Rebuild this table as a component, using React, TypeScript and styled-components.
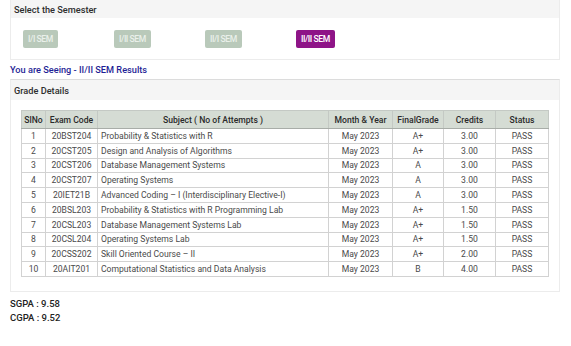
import React from "react";
import styled, { createGlobalStyle } from "styled-components";

const GlobalStyle = createGlobalStyle`
  body {
    margin: 0;
    background: #ffffff;
    font-family: Roboto, "Liberation Sans", Arial, sans-serif;
  }
`;

const Page = styled.div`
  width: 571px;
  height: 346px;
  padding: 0 11px 0 10px;
  box-sizing: border-box;
  overflow: hidden;
`;

const Panel = styled.div`
  border: 1px solid #ececec;
  border-top: none;
  background: #fff;
`;

const PanelHeader = styled.div<{ $h: number }>`
  height: ${({ $h }) => $h}px;
  display: flex;
  align-items: center;
  padding-left: 3px;
  background: #f5f5f5;
  color: #2e2e2e;
  font-size: 9.2px;
  font-weight: 500;
`;

const SemRow = styled.div`
  display: grid;
  grid-template-columns: repeat(4, 91px);
  padding: 12px 0 11px 12px;
`;

const SemButton = styled.div<{ $active?: boolean }>`
  justify-self: start;
  height: 18px;
  padding: 0 5px;
  display: flex;
  align-items: center;
  border-radius: 2px;
  background: ${({ $active }) => ($active ? "#8e1487" : "#b9c9ba")};
  color: ${({ $active }) => ($active ? "#fff" : "#eaf0ea")};
  font-size: 8.6px;
  font-weight: 500;
  letter-spacing: -0.45px;
`;

const Seeing = styled.div`
  height: 19px;
  display: flex;
  align-items: center;
  color: #1f1f96;
  font-size: 9.2px;
  font-weight: 500;
`;

const GradePanel = styled.div`
  border: 1px solid #ececec;
  border-top: 1px solid #dcdcdc;
  padding-bottom: 14px;
`;

const TableWrap = styled.div`
  padding: 10px 0 0 10px;
`;

const Table = styled.table`
  border-collapse: collapse;
  table-layout: fixed;
  width: 527px;
  border: 1px solid #9a9a9a;
  font-size: 8.6px;
  color: #4a4a4a;
`;

const Th = styled.th`
  height: 17px;
  padding: 0;
  background: #d5dcd4;
  border: 1px solid #c4c9c4;
  border-bottom: 1px solid #a8ada8;
  color: #2a2a2a;
  font-weight: 500;
  text-align: center;
  white-space: nowrap;
`;

const Td = styled.td<{ $left?: boolean }>`
  height: 13.8px;
  padding: 0 ${({ $left }) => ($left ? "3px" : "0")};
  border: 1px solid #d2d2d2;
  text-align: ${({ $left }) => ($left ? "left" : "center")};
  white-space: nowrap;
  overflow: hidden;
`;

const Gpa = styled.div`
  padding-top: 5px;
  color: #222;
  font-size: 9.5px;
  font-weight: 500;
  line-height: 14px;
`;

const rows = [
  ["20BST204", "Probability & Statistics with R", "A+", "3.00"],
  ["20CST205", "Design and Analysis of Algorithms", "A+", "3.00"],
  ["20CST206", "Database Management Systems", "A", "3.00"],
  ["20CST207", "Operating Systems", "A", "3.00"],
  ["20IET21B", "Advanced Coding – I (Interdisciplinary Elective-I)", "A", "3.00"],
  ["20BSL203", "Probability & Statistics with R Programming Lab", "A+", "1.50"],
  ["20CSL203", "Database Management Systems Lab", "A+", "1.50"],
  ["20CSL204", "Operating Systems Lab", "A+", "1.50"],
  ["20CSS202", "Skill Oriented Course – II", "A+", "2.00"],
  ["20AIT201", "Computational Statistics and Data Analysis", "B", "4.00"],
];

const widths = [24, 52, 231, 64, 51, 52, 53];

const App = () => {
  return (
    <Page>
      <GlobalStyle />
      <Panel>
        <PanelHeader $h={18}>Select the Semester</PanelHeader>
        <SemRow>
          <SemButton>I/I SEM</SemButton>
          <SemButton>I/II SEM</SemButton>
          <SemButton>II/I SEM</SemButton>
          <SemButton $active>II/II SEM</SemButton>
        </SemRow>
      </Panel>
      <Seeing>You are Seeing - II/II SEM Results</Seeing>
      <GradePanel>
        <PanelHeader $h={20}>Grade Details</PanelHeader>
        <TableWrap>
          <Table>
            <colgroup>
              {widths.map((w, i) => (
                <col key={i} style={{ width: w }} />
              ))}
            </colgroup>
            <thead>
              <tr>
                <Th>SlNo</Th>
                <Th>Exam Code</Th>
                <Th>Subject ( No of Attempts )</Th>
                <Th>Month &amp; Year</Th>
                <Th>FinalGrade</Th>
                <Th>Credits</Th>
                <Th>Status</Th>
              </tr>
            </thead>
            <tbody>
              {rows.map((r, i) => (
                <tr key={r[0]}>
                  <Td>{i + 1}</Td>
                  <Td>{r[0]}</Td>
                  <Td $left>{r[1]}</Td>
                  <Td>May 2023</Td>
                  <Td>{r[2]}</Td>
                  <Td>{r[3]}</Td>
                  <Td>PASS</Td>
                </tr>
              ))}
            </tbody>
          </Table>
        </TableWrap>
      </GradePanel>
      <Gpa>
        SGPA : 9.58
        <br />
        CGPA : 9.52
      </Gpa>
    </Page>
  );
};

export default App;
